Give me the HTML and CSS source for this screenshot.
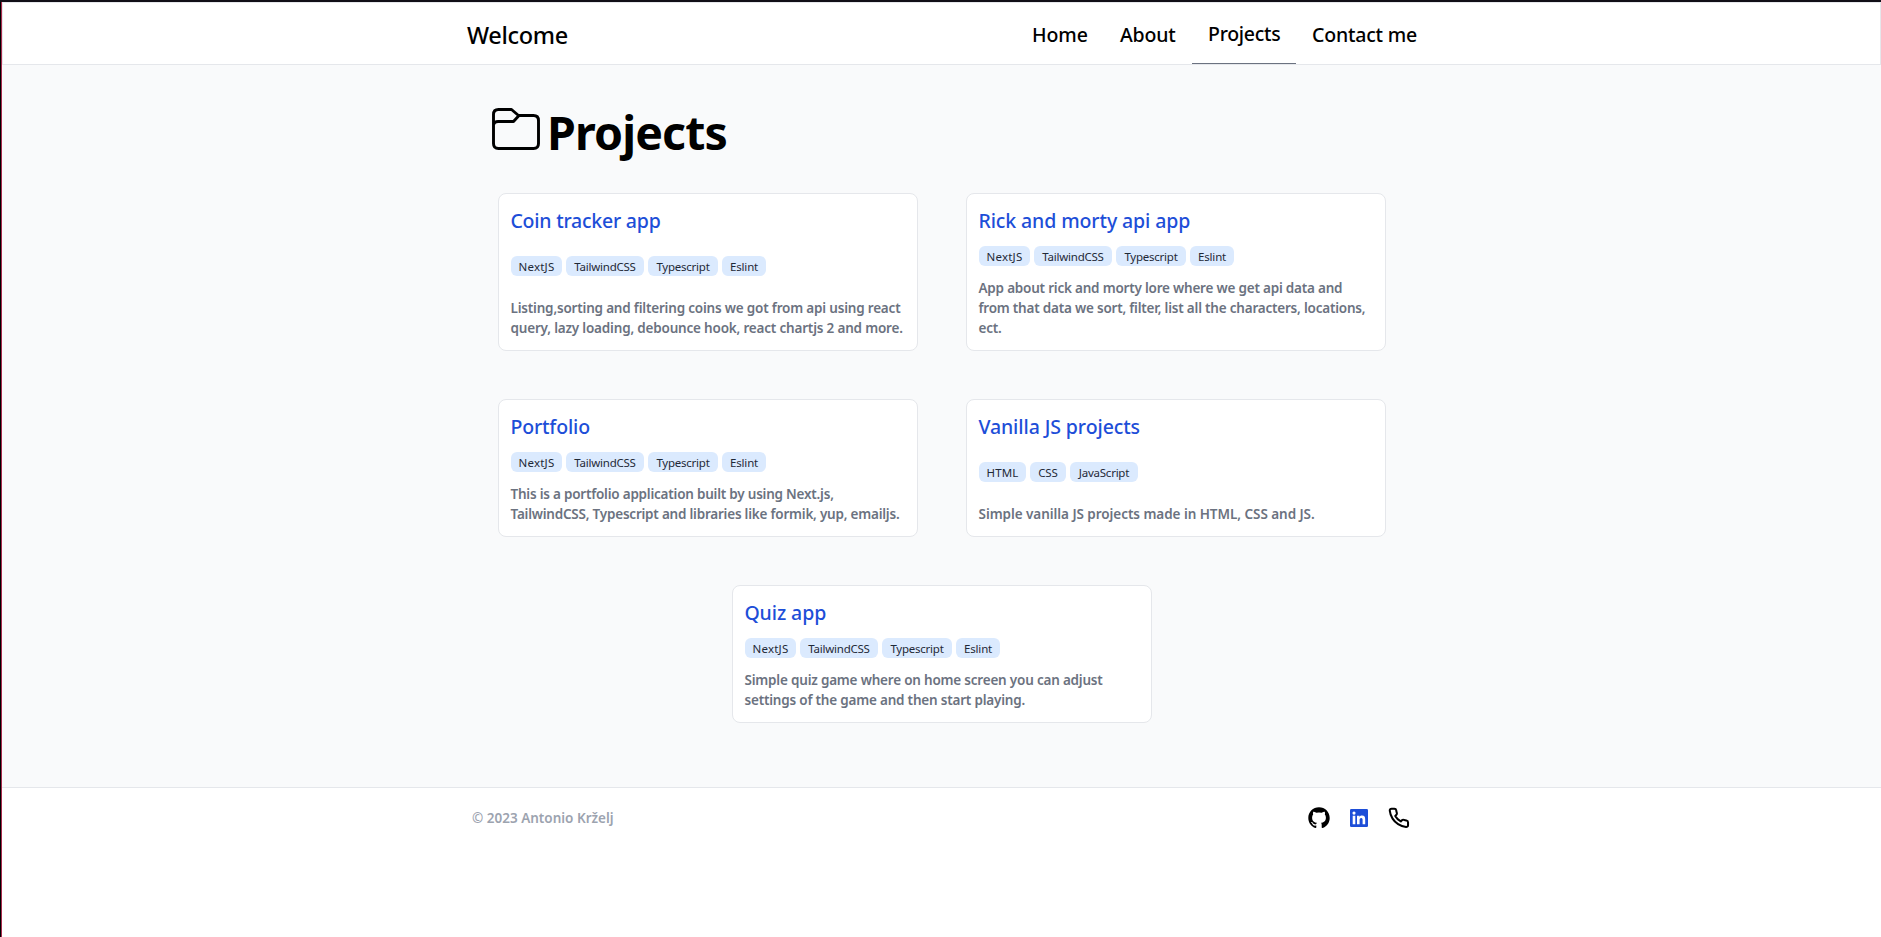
FILE: index.html
```html
<!DOCTYPE html>
<html lang="en">
<head>
<meta charset="utf-8">
<title>Projects</title>
<link rel="stylesheet" href="styles.css">
</head>
<body>
<header class="header">
  <div class="header-inner">
    <a class="brand">Welcome</a>
    <nav class="nav">
      <a class="nav-link home">Home</a>
      <a class="nav-link about">About</a>
      <a class="nav-link projects active">Projects</a>
      <a class="nav-link contact">Contact me</a>
    </nav>
  </div>
</header>
<main class="main">
  <div class="heading">
    <svg class="folder" viewBox="0 0 48 42" fill="none" stroke="#000" stroke-width="2.9" stroke-linejoin="round"><path d="M1.5 17V6.500Q1.500 1.500 6.500 1.500H19.500L26.500 7.500H41.500Q46.500 7.500 46.500 12.500V35.500Q46.500 40.500 41.500 40.500H6.500Q1.500 40.500 1.500 35.500V16.500Q2.500 13.500 6 13.500H21.500L27 7.500"/></svg>
    <h1 class="title">Projects</h1>
  </div>
  <section class="cards">
    <article class="card coin">
      <h2 class="card-title">Coin tracker app</h2>
      <div class="tags"><span class="tag next">NextJS</span><span class="tag tailwind">TailwindCSS</span><span class="tag typescript">Typescript</span><span class="tag eslint">Eslint</span></div>
      <p class="text">Listing,sorting and filtering coins we got from api using react<br>query, lazy loading, debounce hook, react chartjs 2 and more.</p>
    </article>
    <article class="card rick">
      <h2 class="card-title">Rick and morty api app</h2>
      <div class="tags"><span class="tag next">NextJS</span><span class="tag tailwind">TailwindCSS</span><span class="tag typescript">Typescript</span><span class="tag eslint">Eslint</span></div>
      <p class="text">App about rick and morty lore where we get api data and<br>from that data we sort, filter, list all the characters, locations,<br>ect.</p>
    </article>
    <article class="card portfolio">
      <h2 class="card-title">Portfolio</h2>
      <div class="tags"><span class="tag next">NextJS</span><span class="tag tailwind">TailwindCSS</span><span class="tag typescript">Typescript</span><span class="tag eslint">Eslint</span></div>
      <p class="text">This is a portfolio application built by using Next.js,<br>TailwindCSS, Typescript and libraries like formik, yup, emailjs.</p>
    </article>
    <article class="card vanilla">
      <h2 class="card-title">Vanilla JS projects</h2>
      <div class="tags"><span class="tag html">HTML</span><span class="tag css">CSS</span><span class="tag javascript">JavaScript</span></div>
      <p class="text">Simple vanilla JS projects made in HTML, CSS and JS.</p>
    </article>
    <article class="card quiz">
      <h2 class="card-title">Quiz app</h2>
      <div class="tags"><span class="tag next">NextJS</span><span class="tag tailwind">TailwindCSS</span><span class="tag typescript">Typescript</span><span class="tag eslint">Eslint</span></div>
      <p class="text">Simple quiz game where on home screen you can adjust<br>settings of the game and then start playing.</p>
    </article>
  </section>
</main>
<footer class="footer">
  <div class="footer-inner">
    <span class="copyright">© 2023 Antonio Krželj</span>
    <div class="social">
      <svg viewBox="0 0 24 24" fill="#000"><path d="M12 1.300C6 1.300 1.300 6 1.300 12c0 4.700 3 8.700 7.200 10.100.6.1.8-.2.8-.5v-2c-3 .6-3.700-1.300-3.700-1.300-.5-1.200-1.200-1.600-1.200-1.600-1-.7.1-.6.1-.6 1 .1 1.600 1.100 1.600 1.100 1 1.600 2.500 1.200 3.200.9.1-.7.4-1.200.7-1.400-2.400-.3-4.900-1.200-4.900-5.300 0-1.200.4-2.100 1.100-2.900-.1-.3-.5-1.400.1-2.800 0 0 .9-.3 3 1.100a10 10 0 0 1 5.400 0c2-1.400 3-1.100 3-1.100.6 1.400.2 2.500.1 2.800.7.8 1.100 1.700 1.100 2.900 0 4.100-2.500 5-4.900 5.300.4.3.7 1 .7 2v2.900c0 .3.2.6.8.5 4.200-1.400 7.200-5.400 7.200-10.100C22.700 6 18 1.300 12 1.300z"/></svg>
      <svg viewBox="0 0 24 24"><rect x="3" y="3" width="18" height="18" rx="1.300" fill="#1d4ed8"/><circle cx="7" cy="7.100" r="1.550" fill="#fff"/><path d="M5.700 9.800h2.600v8.400H5.700zM10 9.800h2.500v1.200c.5-.9 1.400-1.400 2.600-1.400 2.500 0 3.100 1.600 3.100 4v4.600h-2.600v-4.100c0-1.200-.1-2.200-1.400-2.200s-1.600 1-1.600 2.100v4.200H10z" fill="#fff"/></svg>
      <svg viewBox="0 0 24 24" fill="none" stroke="#000" stroke-width="2.200" stroke-linecap="round" stroke-linejoin="round"><path transform="translate(.8 .8) scale(.92)" d="M22 16.920v3a2 2 0 0 1-2.180 2 19.790 19.790 0 0 1-8.630-3.070 19.500 19.500 0 0 1-6-6 19.790 19.790 0 0 1-3.070-8.670A2 2 0 0 1 4.110 2h3a2 2 0 0 1 2 1.720 12.840 12.840 0 0 0 .7 2.810 2 2 0 0 1-.45 2.110L8.090 9.910a16 16 0 0 0 6 6l1.270-1.270a2 2 0 0 1 2.110-.45 12.840 12.840 0 0 0 2.810.7A2 2 0 0 1 22 16.920z"/></svg>
    </div>
  </div>
</footer>
</body>
</html>
```
FILE: styles.css
```css
* { box-sizing: border-box; }
html { background: linear-gradient(90deg, #000 1px, #a82c4d 1px, #a82c4d 2px, #fff 2px); }
body {
  margin: 0;
  padding-left: 2px;
  min-height: 937px;
  border-top: 2px solid #110f17;
  font-family: "Noto Sans", "Open Sans", sans-serif;
  color: #000;
  overflow: hidden;
}
h1, h2, p { margin: 0; }
.header { height: 63px; background: #fff; border: 1px solid #e5e7eb; }
.header-inner {
  display: flex;
  justify-content: space-between;
  width: 966px;
  height: 61px;
  margin-left: 464px;
}
.brand { font-size: 23.5px; line-height: 64px; font-weight: 500; letter-spacing: -.33px; }
.nav { display: flex; }
.nav-link {
  height: 61px;
  padding-left: 16px;
  font-size: 19.5px;
  line-height: 64px;
  font-weight: 500;
  white-space: nowrap;
}
.home { width: 88px; letter-spacing: -.07px; }
.about { width: 88px; letter-spacing: -.2px; }
.projects { width: 104px; letter-spacing: -.27px; }
.contact { width: 137px; letter-spacing: -.2px; }
.active { line-height: 62px; border-bottom: 1px solid #6b7280; }
.main { height: 722px; padding: 41px 0 0 490px; background: #f9fafb; }
.heading { display: flex; height: 87px; }
.folder { width: 48px; height: 42px; margin: 2px 7px 0 0; }
.title { font-size: 46.5px; line-height: 52px; font-weight: 700; letter-spacing: -.86px; }
.cards {
  display: flex;
  flex-wrap: wrap;
  justify-content: center;
  gap: 48px;
  width: 888px;
  margin-left: 6px;
}
.card {
  display: flex;
  flex-direction: column;
  justify-content: space-between;
  gap: 12px;
  width: 420px;
  padding: 12px;
  background: #fff;
  border: 1px solid #e5e7eb;
  border-radius: 8px;
}
.card-title { height: 28px; font-size: 19.5px; line-height: 30px; font-weight: 500; color: #1d4ed8; text-indent: -.6px; }
.tags { display: flex; gap: 4px; }
.tag {
  height: 20px;
  border-radius: 6px;
  background: #dbeafe;
  color: #1f2937;
  font-size: 11.5px;
  line-height: 22px;
  font-weight: 380;
  text-align: center;
}
.next { width: 51px; letter-spacing: .18px; }
.tailwind { width: 78px; letter-spacing: -.23px; }
.typescript { width: 70px; letter-spacing: -.24px; }
.eslint { width: 44px; letter-spacing: -.15px; }
.html { width: 47px; letter-spacing: .2px; }
.css { width: 36px; letter-spacing: -.1px; }
.javascript { width: 68px; letter-spacing: -.24px; }
.text { margin-left: -.5px; font-size: 13.5px; line-height: 20px; font-weight: 570; color: #6b7280; white-space: nowrap; }
.coin .card-title { letter-spacing: -.22px; }
.rick .card-title { letter-spacing: -.1px; }
.portfolio .card-title { letter-spacing: -.15px; }
.vanilla .card-title { letter-spacing: -.09px; }
.quiz .card-title { letter-spacing: -.09px; }
.coin .text { letter-spacing: -.19px; }
.rick .text { letter-spacing: -.21px; }
.portfolio .text { letter-spacing: -.22px; }
.vanilla .text { letter-spacing: -.05px; }
.quiz .text { letter-spacing: -.2px; }
.footer { border-top: 1px solid #e5e7eb; }
.footer-inner {
  display: flex;
  align-items: center;
  justify-content: space-between;
  width: 939px;
  height: 60px;
  margin-left: 470px;
}
.copyright { font-size: 13.5px; line-height: 20px; font-weight: 600; color: #9ca3af; }
.social { display: flex; gap: 16px; }
.social svg { width: 24px; height: 24px; }
```
